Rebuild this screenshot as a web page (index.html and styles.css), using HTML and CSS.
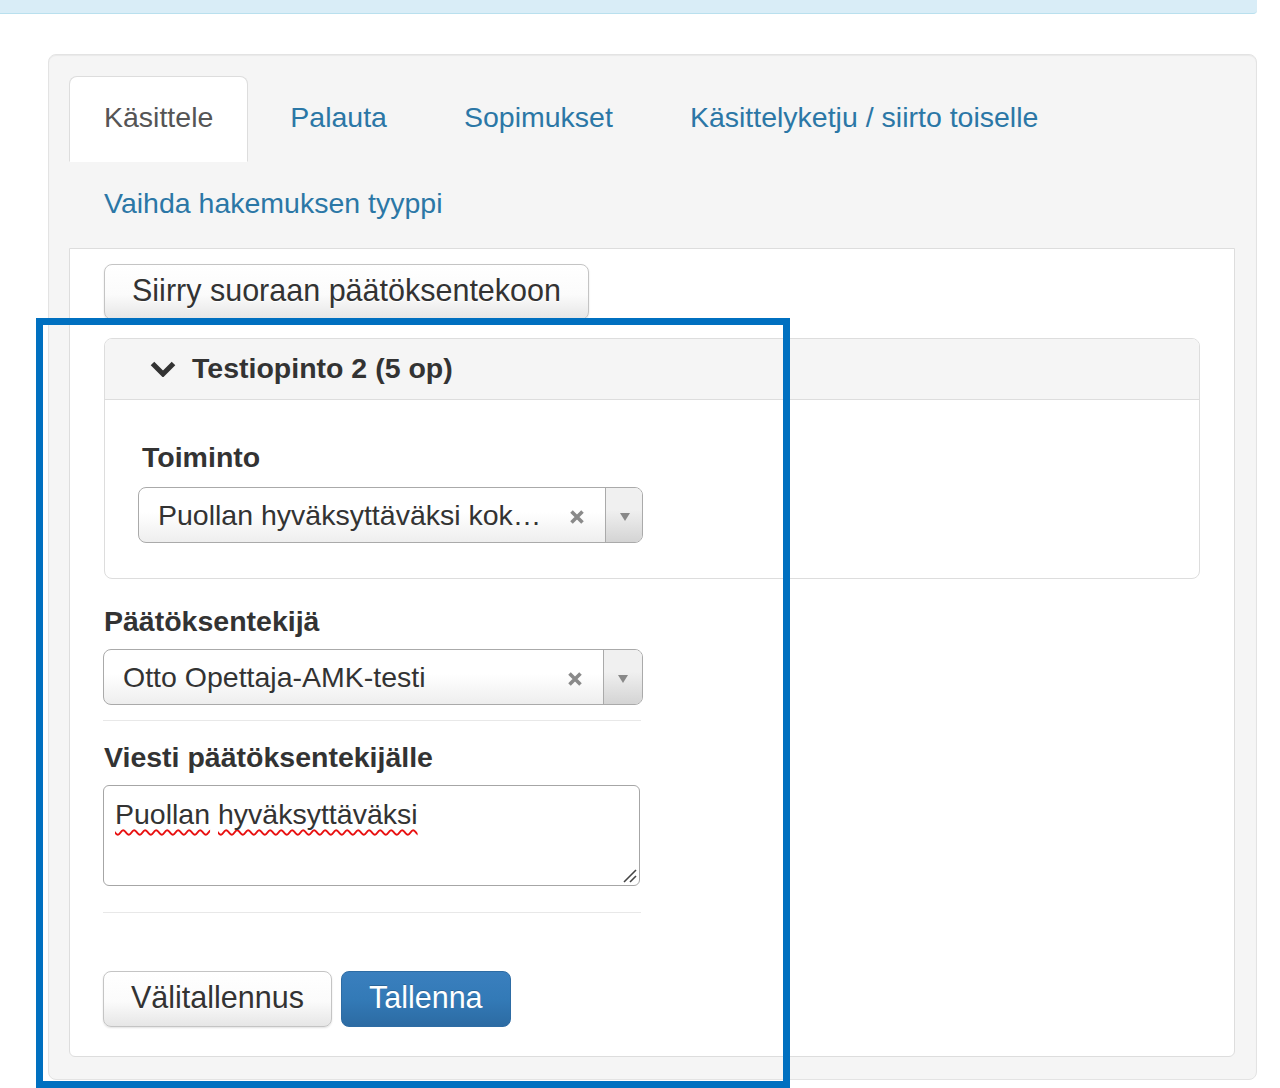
FILE: index.html
```html
<!DOCTYPE html>
<html lang="fi">
<head>
<meta charset="utf-8">
<title>Käsittele</title>
<link rel="stylesheet" href="styles.css">
</head>
<body>
<div class="banner"></div>
<div class="well">
  <ul class="tabs">
    <li class="tab active">Käsittele</li>
    <li class="tab">Palauta</li>
    <li class="tab">Sopimukset</li>
    <li class="tab">Käsittelyketju / siirto toiselle</li>
    <li class="tab">Vaihda hakemuksen tyyppi</li>
  </ul>
  <div class="tab-content">
    <button class="btn btn-default">Siirry suoraan päätöksentekoon</button>
    <div class="panel">
      <div class="panel-heading">
        <svg class="chevron" width="26" height="16" viewBox="0 0 26 16"><polyline points="2.5,2.5 13,13 23.5,2.5" fill="none" stroke="#333" stroke-width="5"/></svg>
        <span class="panel-title">Testiopinto 2 (5 op)</span>
      </div>
      <div class="panel-body">
        <div class="label label-indent">Toiminto</div>
        <div class="select select-narrow">
          <span class="select-text">Puollan hyväksyttäväksi kok…</span>
          <span class="select-clear"><svg width="16" height="16" viewBox="0 0 16 16"><path d="M2.5 2.5 L13.5 13.5 M13.5 2.5 L2.5 13.5" stroke="#8a8a8a" stroke-width="3.6"/></svg></span>
          <span class="select-arrow"><svg width="10" height="8" viewBox="0 0 10 8"><polygon points="0,0 10,0 5,8" fill="#888"/></svg></span>
        </div>
      </div>
    </div>
    <div class="form-col">
      <div class="label">Päätöksentekijä</div>
      <div class="select">
        <span class="select-text">Otto Opettaja-AMK-testi</span>
        <span class="select-clear"><svg width="16" height="16" viewBox="0 0 16 16"><path d="M2.5 2.5 L13.5 13.5 M13.5 2.5 L2.5 13.5" stroke="#8a8a8a" stroke-width="3.6"/></svg></span>
        <span class="select-arrow"><svg width="10" height="8" viewBox="0 0 10 8"><polygon points="0,0 10,0 5,8" fill="#888"/></svg></span>
      </div>
      <hr class="sep first">
      <div class="label label-second">Viesti päätöksentekijälle</div>
      <div class="textarea">
        <span class="misspelled">Puollan</span> <span class="misspelled">hyväksyttäväksi</span>
        <svg class="grip" width="18" height="18" viewBox="0 0 18 18"><line x1="16" y1="4" x2="4" y2="16" stroke="#444" stroke-width="1.6"/><line x1="16" y1="10" x2="10" y2="16" stroke="#444" stroke-width="1.6"/></svg>
      </div>
      <hr class="sep second">
      <div class="actions">
        <button class="btn btn-default">Välitallennus</button>
        <button class="btn btn-primary">Tallenna</button>
      </div>
    </div>
  </div>
</div>
<div class="highlight"></div>
</body>
</html>
```

FILE: styles.css
```css
html, body {
  margin: 0;
  padding: 0;
  overflow: hidden;
  background: #fff;
}
body {
  position: relative;
  width: 1280px;
  height: 1088px;
  font-family: "Liberation Sans", Arial, sans-serif;
  font-size: 28.5px;
  color: #333;
}
.banner {
  width: 1257px;
  height: 13px;
  background: #d9edf7;
  border-bottom: 1px solid #b9e0ee;
  border-bottom-right-radius: 4px;
}
.well {
  margin: 40px 0 0 48px;
  width: 1209px;
  box-sizing: border-box;
  background: #f5f5f5;
  border: 1px solid #e3e3e3;
  border-radius: 8px;
  box-shadow: inset 0 1px 1px rgba(0, 0, 0, 0.05);
  padding: 21px 21px 22px 20px;
}
.tabs {
  list-style: none;
  margin: 0;
  padding: 0;
  display: flex;
  flex-wrap: wrap;
}
.tab {
  padding: 20px 34px 24px 34px;
  line-height: 40px;
  border: 1px solid transparent;
  border-radius: 8px 8px 0 0;
  margin-right: 7px;
  color: #2b77a6;
  white-space: nowrap;
}
.tab.active {
  background: #fff;
  border-color: #ddd;
  border-bottom-color: transparent;
  color: #555;
}
.tab-content {
  background: #fff;
  border: 1px solid #ddd;
  border-radius: 0 0 6px 6px;
  padding: 15px 34px 29px 34px;
}
.btn {
  display: inline-block;
  box-sizing: border-box;
  height: 56px;
  margin: 0;
  padding: 1px 27px 5px 27px;
  font-family: "Liberation Sans", Arial, sans-serif;
  font-size: 30.5px;
  line-height: 48px;
  border-radius: 8px;
  border: 1px solid #c4c4c4;
  cursor: pointer;
}
.btn-default {
  color: #333;
  background: linear-gradient(to bottom, #fff 0%, #fbfbfb 55%, #e6e6e6 100%);
  text-shadow: 0 1px 0 #fff;
  box-shadow: 0 1px 2px rgba(0, 0, 0, 0.12);
}
.btn-primary {
  color: #fff;
  background: linear-gradient(to bottom, #3a7fbe 0%, #337ab7 50%, #2c6ba3 100%);
  border-color: #2e6ca4;
  text-shadow: 0 -1px 0 rgba(0, 0, 0, 0.2);
}
.panel {
  margin-top: 18px;
  border: 1px solid #ddd;
  border-radius: 8px;
  overflow: hidden;
}
.panel-heading {
  display: flex;
  align-items: center;
  background: #f5f5f5;
  border-bottom: 1px solid #ddd;
  padding: 9px 0 10px 45px;
  line-height: 41px;
  gap: 16px;
}
.chevron {
  display: block;
  flex: none;
}
.panel-title {
  font-weight: bold;
  color: #333;
}
.panel-body {
  padding: 37px 33px 35px 33px;
}
.label {
  font-weight: bold;
  line-height: 40px;
  margin-bottom: 10px;
  padding-left: 1px;
  color: #333;
}
.label-indent {
  padding-left: 4px;
}
.select {
  display: flex;
  align-items: stretch;
  box-sizing: border-box;
  width: 540px;
  height: 56px;
  border: 1px solid #aaa;
  border-radius: 8px;
  background: linear-gradient(to top, #eee 0%, #fff 55%);
  overflow: hidden;
}
.select-narrow {
  width: 505px;
}
.select-text {
  flex: 1;
  padding-left: 19px;
  line-height: 54px;
  white-space: nowrap;
  color: #333;
}
.select-clear {
  flex: none;
  display: flex;
  align-items: center;
  justify-content: flex-end;
  width: 44px;
  padding-right: 20px;
  padding-top: 3px;
}
.select-clear svg {
  display: block;
}
.select-arrow {
  flex: none;
  width: 39px;
  display: flex;
  align-items: center;
  justify-content: center;
  border-left: 1px solid #aaa;
  background: linear-gradient(to top, #d4d4d4 0%, #f0f0f0 60%);
  padding-top: 3px;
  box-sizing: border-box;
}
.select-arrow svg {
  display: block;
}
.form-col {
  margin-top: 22px;
  width: 540px;
  margin-left: -1px;
}
.form-col .label {
  margin-bottom: 8px;
}
.sep {
  border: 0;
  border-top: 1px solid #e8e8e8;
  margin: 0;
  width: 538px;
}
.sep.first {
  margin-top: 15px;
}
.label-second {
  margin-top: 16px;
}
.textarea {
  position: relative;
  box-sizing: border-box;
  width: 537px;
  height: 101px;
  border: 1px solid #a6a6a6;
  border-radius: 6px;
  padding: 8px 11px;
  line-height: 40px;
  color: #333;
}
.misspelled {
  text-decoration: underline wavy #e81010;
  text-decoration-thickness: 1.5px;
  text-underline-offset: 5px;
  text-decoration-skip-ink: none;
}
.grip {
  position: absolute;
  right: 1px;
  bottom: 1px;
}
.sep.second {
  margin-top: 26px;
}
.actions {
  display: flex;
  gap: 9px;
  margin-top: 58px;
}
.highlight {
  position: absolute;
  left: 36px;
  top: 318px;
  width: 754px;
  height: 770px;
  box-sizing: border-box;
  border: 7px solid #0070c0;
  pointer-events: none;
}
```
